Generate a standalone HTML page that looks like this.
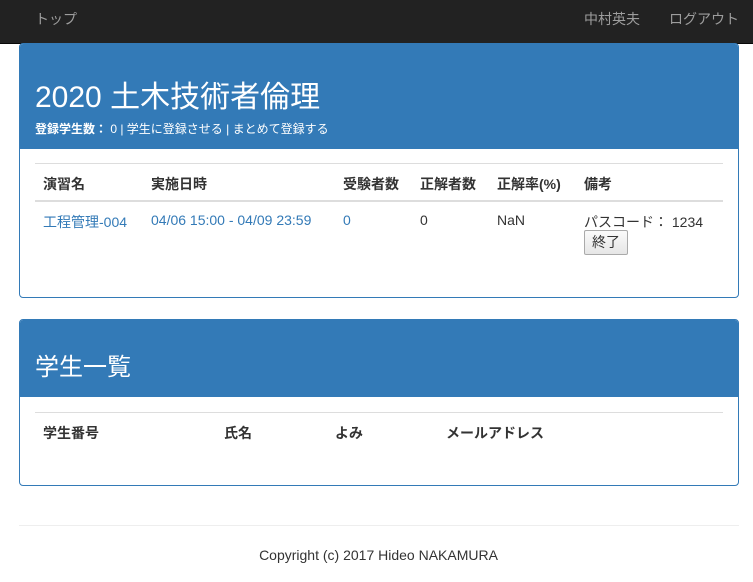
<!DOCTYPE html><html><head><meta charset="utf-8"><style>
*{box-sizing:border-box}body{margin:0;width:753px;height:582px;background:#fff;font-family:"Liberation Sans","Noto Sans CJK JP",sans-serif;font-size:14px;color:#333;position:relative;overflow:hidden}
.a{position:absolute;white-space:nowrap}
.nav{position:absolute;left:0;top:0;width:753px;height:44px;background:#222;border-bottom:1px solid #080808}
.nav span{position:absolute;top:9px;color:#9d9d9d;font-size:14px}
.panel{position:absolute;left:19px;width:720px;border:1px solid #337ab7;border-radius:4px;overflow:hidden}
.ph{background:#337ab7;color:#fff;position:relative}
.line{position:absolute;left:15px;width:688px;border-top:1px solid #ddd}
a{color:#337ab7;text-decoration:none}
th{font-weight:bold}
</style></head><body>
<div class="nav"><span style="left:35px">トップ</span><span style="left:584px">中村英夫</span><span style="left:669px">ログアウト</span></div>
<div class="panel" style="top:43px;height:255px">
<div class="ph" style="height:105px">
<div class="a" style="left:15px;top:28px;font-size:30px">2020 土木技術者倫理</div>
<div class="a" style="left:15px;top:76px;font-size:12px"><b>登録学生数：</b> 0 | 学生に登録させる | まとめて登録する</div>
</div>
<div class="line" style="top:119px"></div>
<div class="line" style="top:156px;border-top:2px solid #ddd"></div>
<div class="a" style="left:23px;top:130px;font-weight:bold">演習名</div>
<div class="a" style="left:131px;top:130px;font-weight:bold">実施日時</div>
<div class="a" style="left:323px;top:130px;font-weight:bold">受験者数</div>
<div class="a" style="left:400px;top:130px;font-weight:bold">正解者数</div>
<div class="a" style="left:477px;top:130px;font-weight:bold">正解率(%)</div>
<div class="a" style="left:564px;top:130px;font-weight:bold">備考</div>
<div class="a" style="left:23px;top:168px"><a>工程管理-004</a></div>
<div class="a" style="left:131px;top:168px"><a>04/06 15:00 - 04/09 23:59</a></div>
<div class="a" style="left:323px;top:168px"><a>0</a></div>
<div class="a" style="left:400px;top:168px">0</div>
<div class="a" style="left:477px;top:168px">NaN</div>
<div class="a" style="left:564px;top:168px">パスコード： 1234</div>
<div class="a" style="left:564px;top:186px;width:44px;height:25px;border:1px solid #aaa;background:linear-gradient(#fafafa,#e6e6e6);border-radius:2px;text-align:center;line-height:23px">終了</div>
</div>
<div class="panel" style="top:319px;height:167px">
<div class="ph" style="height:77px">
<div class="a" style="left:15px;top:27px;font-size:24px">学生一覧</div>
</div>
<div class="line" style="top:92px"></div>
<div class="a" style="left:23px;top:103px;font-weight:bold">学生番号</div>
<div class="a" style="left:204px;top:103px;font-weight:bold">氏名</div>
<div class="a" style="left:315px;top:103px;font-weight:bold">よみ</div>
<div class="a" style="left:426px;top:103px;font-weight:bold">メールアドレス</div>
</div>
<div style="position:absolute;left:19px;width:720px;top:525px;border-top:1px solid #eee"></div>
<div class="a" style="left:0;width:757px;text-align:center;top:547px">Copyright (c) 2017 Hideo NAKAMURA</div>
</body></html>
